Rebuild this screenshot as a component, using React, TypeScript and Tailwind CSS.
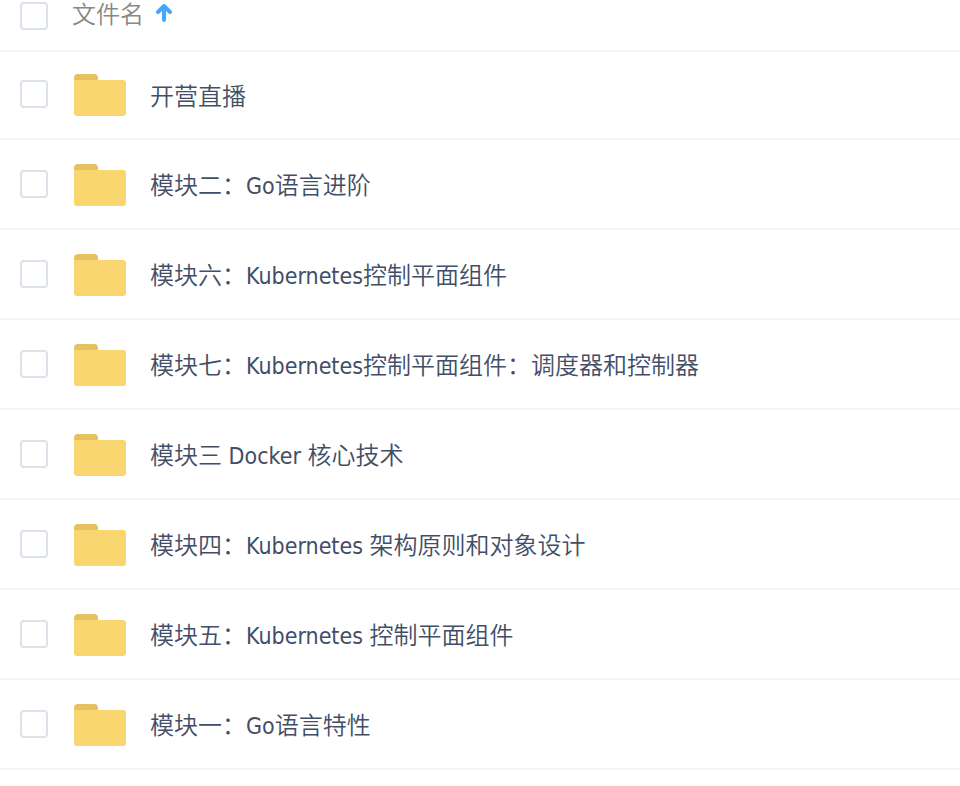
type Part = { text: string; latin?: boolean };

const folders: Part[][] = [
  [{ text: "开营直播" }],
  [{ text: "模块二：" }, { text: "Go", latin: true }, { text: "语言进阶" }],
  [{ text: "模块六：" }, { text: "Kubernetes", latin: true }, { text: "控制平面组件" }],
  [{ text: "模块七：" }, { text: "Kubernetes", latin: true }, { text: "控制平面组件：调度器和控制器" }],
  [{ text: "模块三" }, { text: " Docker ", latin: true }, { text: "核心技术" }],
  [{ text: "模块四：" }, { text: "Kubernetes ", latin: true }, { text: "架构原则和对象设计" }],
  [{ text: "模块五：" }, { text: "Kubernetes ", latin: true }, { text: "控制平面组件" }],
  [{ text: "模块一：" }, { text: "Go", latin: true }, { text: "语言特性" }],
];

function Checkbox({ id, label }: { id: string; label: string }) {
  return (
    <input
      id={id}
      type="checkbox"
      aria-label={label}
      className="size-7 shrink-0 appearance-none rounded-[4px] border-2 border-[#dce2ea] bg-white checked:border-[#40a0ff] checked:bg-[#40a0ff]"
    />
  );
}

function FolderIcon() {
  return (
    <svg className="h-[42px] w-[52px] shrink-0" viewBox="0 0 52 42" aria-hidden="true">
      <path d="M0 9V4Q0 0 4 0H20Q24 0 24 4V9Z" fill="#e5c161" />
      <path d="M0 6H49Q52 6 52 9V39Q52 42 49 42H3Q0 42 0 39Z" fill="#f9d670" />
    </svg>
  );
}

function FolderRow({ parts, index }: { parts: Part[]; index: number }) {
  const name = parts.map((p) => p.text).join("");
  return (
    <li className="flex h-[90px] items-center border-b-2 border-[#f2f6fc] px-5 pt-[2px] first:border-t-2 first:pt-0">
      <div className="flex pb-[2px]">
        <Checkbox id={`folder-${index}`} label={name} />
      </div>
      <a href="#" className="ml-[26px] flex items-center gap-6 text-[#424e67]">
        <FolderIcon />
        <span className="whitespace-pre text-2xl leading-9 font-[350]">
          {parts.map((p) => (
            <span
              key={p.text}
              className={p.latin ? "font-['DejaVu_Sans_Condensed','Noto_Sans',sans-serif] text-[23px] font-normal" : ""}
            >
              {p.text}
            </span>
          ))}
        </span>
      </a>
    </li>
  );
}

export default function App() {
  return (
    <main className="min-h-screen bg-white font-['Noto_Sans_CJK_SC',sans-serif]">
      <header className="flex h-[50px] items-center px-5 pb-[18px]">
        <Checkbox id="select-all" label="全选" />
        <button type="button" className="ml-6 flex items-center gap-3 pb-1.5 text-2xl leading-7 font-[350] text-[#888888]">
          文件名
          <svg
            className="h-5 w-4"
            viewBox="0 0 16 20"
            fill="none"
            stroke="#46a6fb"
            strokeWidth="4"
            strokeLinecap="round"
            strokeLinejoin="round"
            aria-hidden="true"
          >
            <path d="M8 17V3M2 9L8 3L14 9" />
          </svg>
        </button>
      </header>
      <ul>
        {folders.map((parts, i) => (
          <FolderRow key={i} parts={parts} index={i} />
        ))}
      </ul>
    </main>
  );
}
